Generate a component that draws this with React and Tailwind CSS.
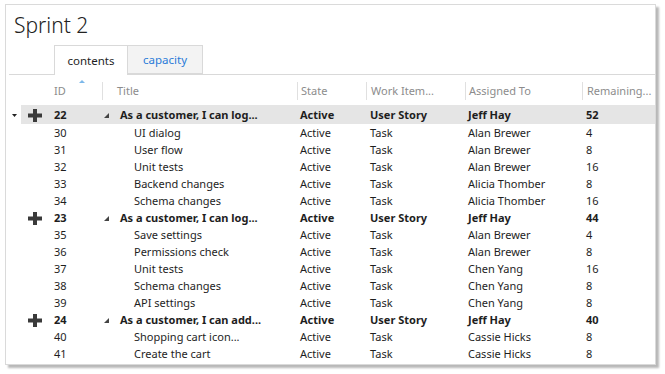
const rows = [
  { id: 22, title: "As a customer, I can log...", type: "User Story", who: "Jeff Hay", rem: 52, parent: true, selected: true },
  { id: 30, title: "UI dialog", type: "Task", who: "Alan Brewer", rem: 4 },
  { id: 31, title: "User flow", type: "Task", who: "Alan Brewer", rem: 8 },
  { id: 32, title: "Unit tests", type: "Task", who: "Alan Brewer", rem: 16 },
  { id: 33, title: "Backend changes", type: "Task", who: "Alicia Thomber", rem: 8 },
  { id: 34, title: "Schema changes", type: "Task", who: "Alicia Thomber", rem: 16 },
  { id: 23, title: "As a customer, I can log...", type: "User Story", who: "Jeff Hay", rem: 44, parent: true },
  { id: 35, title: "Save settings", type: "Task", who: "Alan Brewer", rem: 4 },
  { id: 36, title: "Permissions check", type: "Task", who: "Alan Brewer", rem: 8 },
  { id: 37, title: "Unit tests", type: "Task", who: "Chen Yang", rem: 16 },
  { id: 38, title: "Schema changes", type: "Task", who: "Chen Yang", rem: 8 },
  { id: 39, title: "API settings", type: "Task", who: "Chen Yang", rem: 8 },
  { id: 24, title: "As a customer, I can add...", type: "User Story", who: "Jeff Hay", rem: 40, parent: true },
  { id: 40, title: "Shopping cart icon...", type: "Task", who: "Cassie Hicks", rem: 8 },
  { id: 41, title: "Create the cart", type: "Task", who: "Cassie Hicks", rem: 8 },
];

function Plus() {
  return (
    <svg width="14" height="13" viewBox="0 0 14 13">
      <rect x="5" y="0" width="4" height="13" fill="#3a3a3a" />
      <rect x="0" y="4.5" width="14" height="4" fill="#3a3a3a" />
    </svg>
  );
}

function Tri() {
  return (
    <svg width="5" height="5" viewBox="0 0 5 5">
      <polygon points="5,0 5,5 0,5" fill="#444" />
    </svg>
  );
}

function Row({ r }) {
  return (
    <div className={"flex items-center " + (r.selected ? "h-[19px]" : "h-[17px]")}>
      <div className="w-[15px] flex justify-center pl-[1px] pt-[2px]">
        {r.selected && (
          <svg width="5" height="3" viewBox="0 0 5 3">
            <polygon points="0,0 5,0 2.5,3" fill="#222" />
          </svg>
        )}
      </div>
      <div className={"flex flex-1 items-center h-full pt-[2px] " + (r.selected ? "bg-[#e5e5e5]" : "") + (r.parent ? " font-bold" : "")}>
        <div className="w-[33px] pl-[7px] flex items-center">{r.parent && <Plus />}</div>
        <div className="w-[50px]">{r.id}</div>
        <div className="w-[16px] flex items-center">{r.parent && <Tri />}</div>
        <div className={"w-[180px] whitespace-nowrap " + (r.parent ? "" : "pl-[14px]")}>{r.title}</div>
        <div className="w-[70px]">Active</div>
        <div className="w-[98px]">{r.type}</div>
        <div className="w-[118px]">{r.who}</div>
        <div className="flex-1">{r.rem}</div>
      </div>
    </div>
  );
}

export default function App() {
  return (
    <div className="w-[665px] h-[374px] bg-white pt-[4px] pl-[5px] font-['Noto_Sans',sans-serif] text-[11px] text-[#1e1e1e]">
      <div className="w-[651px] h-[361px] border border-[#dadada] bg-white shadow-[3px_3px_2px_rgba(0,0,0,0.28)] flex flex-col">
        <div className="h-[40px] pl-[8px] pt-[7px] text-[21px] font-light leading-[26px] text-[#222]">Sprint 2</div>

        <div className="ml-[3px] border-b border-[#d9d9d9] pl-[45px] flex h-[30px]">
          <div className="w-[74px] border border-b-0 border-[#d9d9d9] bg-white flex items-center justify-center text-[11.5px] mb-[-1px] relative">
            contents
          </div>
          <div className="w-[75px] border border-l-0 border-[#d9d9d9] bg-[#f3f3f3] flex items-center justify-center text-[11.5px] text-[#2a7bd8]">
            capacity
          </div>
        </div>

        <div className="h-[30px] pt-[7px] flex text-[#8c8c8c]">
          <div className="w-[48px] ml-[48px] h-[18px] flex items-center relative">
            ID
            <svg className="absolute left-[25px] top-[-2px]" width="6" height="3" viewBox="0 0 6 3">
              <polygon points="0,3 3,0 6,3" fill="#7cb8ea" />
            </svg>
          </div>
          <div className="w-[195px] h-[18px] border-l border-[#e0e0e0] pl-[14px] flex items-center">Title</div>
          <div className="w-[69px] h-[18px] border-l border-[#e0e0e0] pl-[3px] flex items-center">State</div>
          <div className="w-[99px] h-[18px] border-l border-[#e0e0e0] pl-[4px] flex items-center">Work Item...</div>
          <div className="w-[117px] h-[18px] border-l border-[#e0e0e0] pl-[3px] flex items-center">Assigned To</div>
          <div className="flex-1 h-[18px] border-l border-[#e0e0e0] pl-[4px] flex items-center">Remaining...</div>
        </div>

        <div className="flex flex-col">
          {rows.map((r, i) => (
            <Row key={i} r={r} />
          ))}
        </div>
      </div>
    </div>
  );
}
